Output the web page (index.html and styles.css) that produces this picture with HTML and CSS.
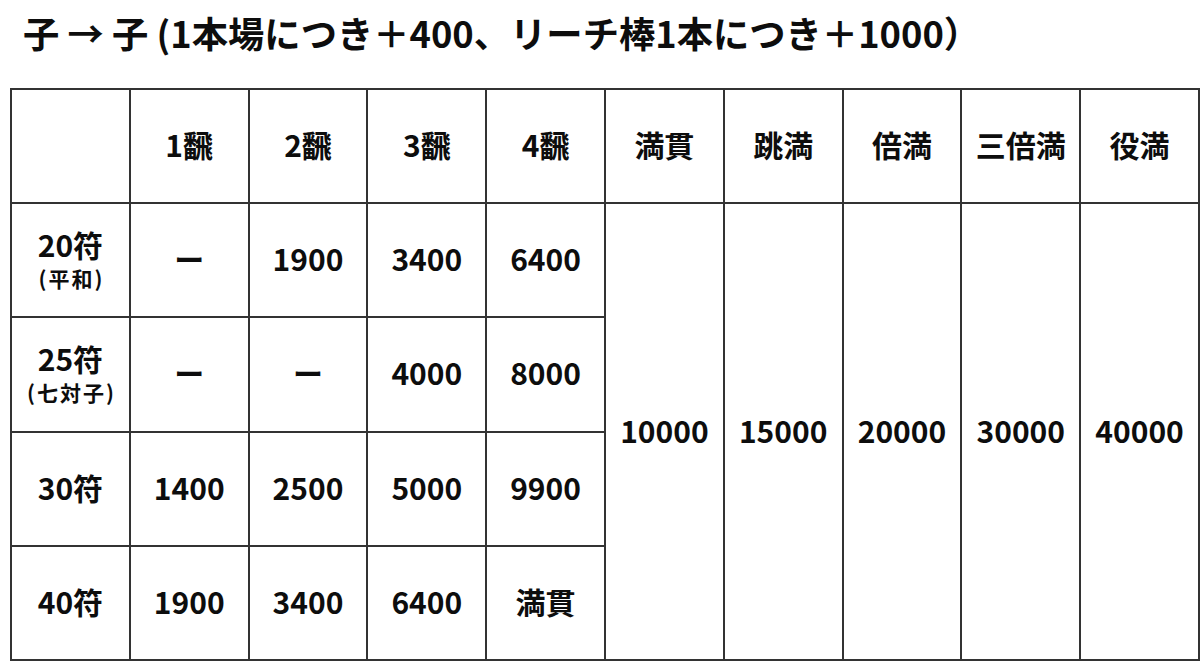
FILE: index.html
```html
<!DOCTYPE html>
<html lang="ja">
<head>
<meta charset="utf-8">
<link rel="stylesheet" href="styles.css">
</head>
<body>
<h1 class="title">子 → 子 (1本場につき＋400、リーチ棒1本につき＋1000）</h1>
<table class="score">
  <colgroup>
    <col class="c"><col class="c"><col class="c"><col class="c"><col class="c">
    <col class="c"><col class="c"><col class="c"><col class="c"><col class="c">
  </colgroup>
  <tr class="head">
    <td></td><td>1飜</td><td>2飜</td><td>3飜</td><td>4飜</td>
    <td>満貫</td><td>跳満</td><td>倍満</td><td>三倍満</td><td>役満</td>
  </tr>
  <tr>
    <td><div class="fu">20符</div><div class="sub">(平和)</div></td>
    <td>ー</td><td>1900</td><td>3400</td><td>6400</td>
    <td rowspan="4">10000</td><td rowspan="4">15000</td><td rowspan="4">20000</td><td rowspan="4">30000</td><td rowspan="4">40000</td>
  </tr>
  <tr>
    <td><div class="fu">25符</div><div class="sub">(七対子)</div></td>
    <td>ー</td><td>ー</td><td>4000</td><td>8000</td>
  </tr>
  <tr>
    <td>30符</td><td>1400</td><td>2500</td><td>5000</td><td>9900</td>
  </tr>
  <tr>
    <td>40符</td><td>1900</td><td>3400</td><td>6400</td><td>満貫</td>
  </tr>
</table>
</body>
</html>
```
FILE: styles.css
```css
html, body {
  margin: 0;
  padding: 0;
  background: #ffffff;
}
body {
  font-family: "Noto Sans CJK JP", "Noto Sans", sans-serif;
  color: #0d0d0d;
  font-weight: 700;
}
.title {
  margin: 14px 0 0 23px;
  font-size: 36.3px;
  line-height: 36px;
  height: 74px;
  font-weight: 700;
  white-space: nowrap;
}
.score {
  margin-left: 10px;
  border-collapse: collapse;
  table-layout: fixed;
  width: 1188px;
  border: 2px solid #333333;
}
.score col.c {
  width: 118.8px;
}
.score td {
  border: 2px solid #333333;
  height: 108.2px;
  padding: 0 0 4px 0;
  text-align: center;
  vertical-align: middle;
  font-size: 30px;
  line-height: 36px;
}
.score .fu {
  line-height: 32px;
}
.score .sub {
  margin-top: 7px;
  font-size: 21px;
  line-height: 22px;
  letter-spacing: 2px;
  padding-left: 2px;
}
```
